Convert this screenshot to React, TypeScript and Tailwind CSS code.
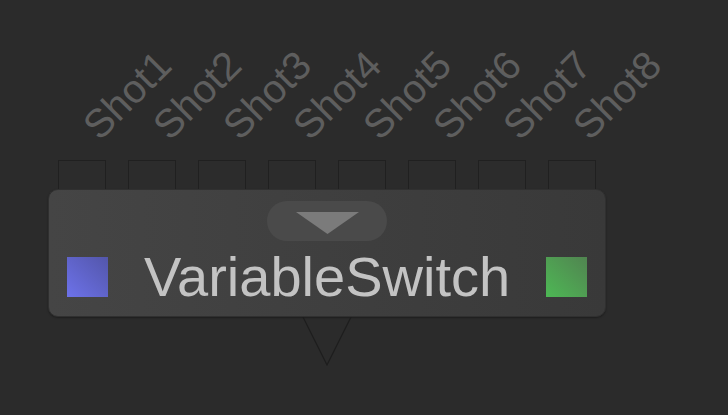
const shots = ["Shot1", "Shot2", "Shot3", "Shot4", "Shot5", "Shot6", "Shot7", "Shot8"];

export default function App() {
  return (
    <div
      className="w-[728px] h-[415px] overflow-hidden bg-[#2b2b2b] pl-[48px] pt-[160px]"
      style={{ fontFamily: '"Liberation Sans", Arial, sans-serif' }}
    >
      <div className="w-[558px]">
        {/* input ports + labels */}
        <div className="flex gap-[22px] pl-[10px]">
          {shots.map((s) => (
            <div key={s} className="relative w-[48px] h-[29px] border border-b-0 border-[#202020] bg-[#2c2c2c]">
              <span className="absolute left-[45px] bottom-[43px] origin-bottom-left -rotate-45 whitespace-nowrap text-[40px] leading-none text-[#5e5e5e]">
                {s}
              </span>
            </div>
          ))}
        </div>

        {/* node body */}
        <div className="h-[128px] rounded-[10px] border border-[#303030] bg-linear-to-r from-[#454545] to-[#393939] shadow-[0_1px_2px_rgba(0,0,0,0.35)] flex flex-col items-center pt-[11px]">
          <div className="w-[120px] h-[40px] rounded-full bg-[#4a4a4a] flex justify-center pt-[11px]">
            <svg width="63" height="22" viewBox="0 0 63 22">
              <polygon points="0,0 63,0 31.5,22" fill="#7b7b7b" />
            </svg>
          </div>
          <div className="mt-[8px] w-full h-[56px] flex items-center justify-between px-[18px]">
            <div className="w-[41px] h-[40px] bg-linear-to-tr from-[#6d72ea] to-[#5356aa]" />
            <span className="text-[56px] leading-none text-[#c3c3c3]">VariableSwitch</span>
            <div className="w-[41px] h-[40px] bg-linear-to-tr from-[#4cb854] to-[#508450]" />
          </div>
        </div>

        {/* output */}
        <div className="flex justify-center">
          <svg width="50" height="50" viewBox="0 0 50 50">
            <polyline points="1,0 25,48 49,0" fill="none" stroke="#1d1d1d" strokeWidth="1.2" />
          </svg>
        </div>
      </div>
    </div>
  );
}
